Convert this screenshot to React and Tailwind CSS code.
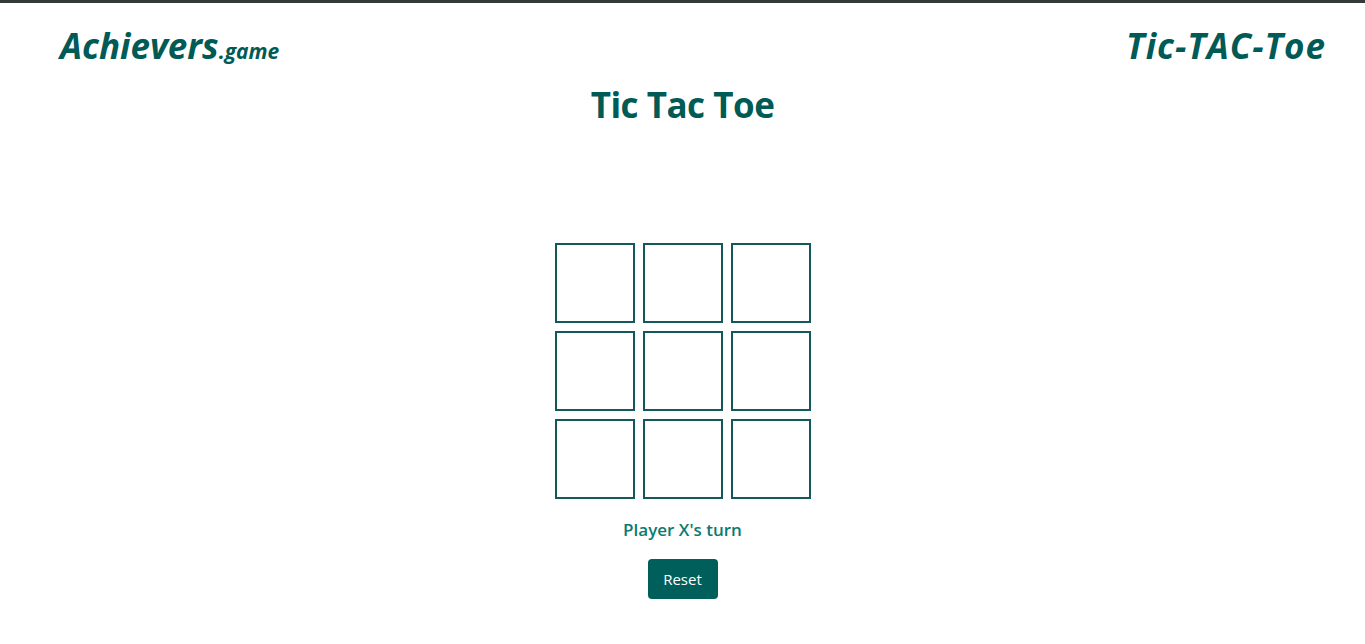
import React, { useState } from "react";

export default function App() {
  const [cells, setCells] = useState(Array(9).fill(null));
  const [xTurn, setXTurn] = useState(true);
  const click = (i) => {
    if (cells[i]) return;
    const n = cells.slice();
    n[i] = xTurn ? "X" : "O";
    setCells(n);
    setXTurn(!xTurn);
  };
  return (
    <div className="min-h-[644px] bg-white border-t-[3px] border-[#343a3a] text-[#005a55]" style={{ fontFamily: '"Open Sans", "Noto Sans", sans-serif' }}>
      <div className="flex justify-between items-end pl-[60px] pr-[39px] pt-[15px] h-[60px]">
        <div className="font-bold italic text-[35px] leading-none tracking-[0px]">
          Achievers<span className="text-[21px]">.game</span>
        </div>
        <div className="font-bold italic text-[35px] leading-none tracking-[1px]">Tic-TAC-Toe</div>
      </div>
      <h1 className="text-center font-bold text-[35px] leading-none mt-[24px] tracking-[-0.5px]">Tic Tac Toe</h1>
      <div className="flex flex-col items-center mt-[121px]">
        <div className="grid grid-cols-[80px_80px_80px] gap-2">
          {cells.map((c, i) => (
            <button key={i} onClick={() => click(i)} className="w-[80px] h-[80px] border-2 border-[#13595a] bg-white text-[40px] font-bold text-[#005a55] flex items-center justify-center">
              {c}
            </button>
          ))}
        </div>
        <div className="mt-[19px] text-[17px] font-semibold text-[#0b7a70] leading-[24px]">Player {xTurn ? "X" : "O"}'s turn</div>
        <button onClick={() => { setCells(Array(9).fill(null)); setXTurn(true); }} className="mt-[17px] w-[70px] h-[40px] rounded-[4px] bg-[#005f5a] text-white text-[15px]">Reset</button>
      </div>
    </div>
  );
}
